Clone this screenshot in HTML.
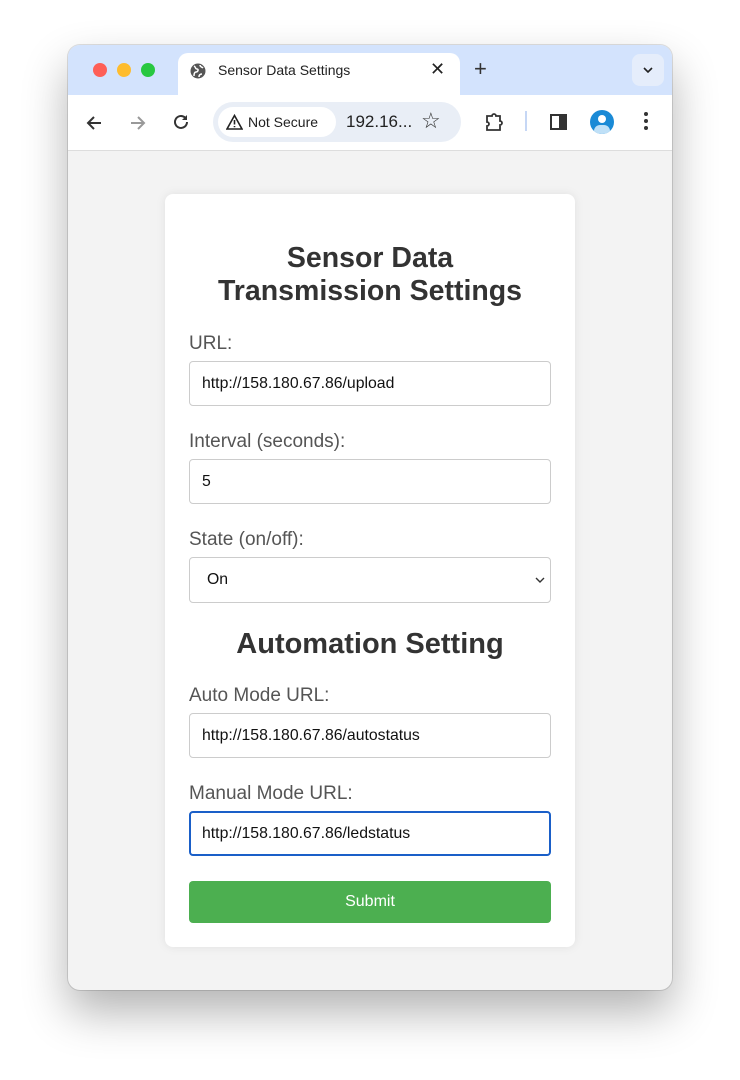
<!DOCTYPE html>
<html><head><style>
*{box-sizing:border-box;margin:0;padding:0}
body{width:740px;height:1080px;background:#fff;font-family:"Liberation Sans",Arial,sans-serif;position:relative;overflow:hidden}
.win{position:absolute;left:68px;top:45px;width:604px;height:945px;border-radius:12px;overflow:hidden;background:#f3f3f3;box-shadow:0 22px 45px rgba(0,0,0,.3),0 0 0 1px rgba(0,0,0,.12)}
.tabbar{position:absolute;left:0;top:0;width:604px;height:50px;background:#d3e3fd}
.dot{position:absolute;top:18px;width:14px;height:14px;border-radius:50%}
.tab{position:absolute;left:110px;top:8px;width:282px;height:44px;background:#fff;border-radius:10px 10px 0 0}
.toolbar{position:absolute;left:0;top:50px;width:604px;height:56px;background:#fff;border-bottom:1px solid #ddd}
.omni{position:absolute;left:145px;top:7px;width:248px;height:40px;border-radius:20px;background:#e9eef6}
.ns{position:absolute;left:5px;top:5px;width:118px;height:30px;border-radius:15px;background:#fff;font-size:14px;line-height:30px;padding-left:30px;color:#222}
.card{position:absolute;left:97px;top:149px;width:410px;height:753px;background:#fff;border-radius:8px;box-shadow:0 0 10px rgba(0,0,0,.08)}
h1{position:absolute;left:0;width:410px;text-align:center;font-size:28.5px;font-weight:bold;color:#333;line-height:33px}
.lbl{position:absolute;left:24px;font-size:19px;color:#555}
.inp{position:absolute;left:24px;width:362px;height:45px;border:1px solid #ccc;border-radius:4px;font-size:15.8px;color:#111;padding-left:12px;line-height:43px}
.btn{position:absolute;left:24px;top:687px;width:362px;height:42px;background:#4caf50;border-radius:4px;color:#fff;font-size:16px;text-align:center;line-height:42px}
</style></head><body>
<div class="win">
<div class="tabbar">
<div class="dot" style="left:25px;background:#fe5f57"></div>
<div class="dot" style="left:49px;background:#febc2e"></div>
<div class="dot" style="left:73px;background:#28c840"></div>
<div class="tab">
<svg style="position:absolute;left:12px;top:10px" width="16" height="16" viewBox="0 0 16 16"><circle cx="8" cy="8" r="7.5" fill="#555"/><path d="M4 3c2 1 1 3 3 3s1 3-1 3-2 3-2 4M10 2c0 2 2 2 3 3M9 14c0-2 1-3 3-3" stroke="#fff" stroke-width="1.5" fill="none"/></svg>
<div style="position:absolute;left:40px;top:9px;font-size:14px;color:#222">Sensor Data Settings</div>
<div style="position:absolute;left:252px;top:6px;font-size:18px;color:#222">✕</div>
</div>
<div style="position:absolute;left:406px;top:11px;font-size:22px;color:#333">+</div>
<div style="position:absolute;left:564px;top:9px;width:32px;height:32px;border-radius:8px;background:#e5edfb"><svg style="position:absolute;left:11px;top:13px" width="10" height="6"><path d="M1 1l4 4 4-4" stroke="#222" stroke-width="1.6" fill="none"/></svg></div>
</div>
<div class="toolbar">
<svg style="position:absolute;left:17px;top:19px" width="18" height="18" viewBox="0 0 18 18"><path d="M16 9H3M9 3L3 9l6 6" stroke="#333" stroke-width="2" fill="none"/></svg>
<svg style="position:absolute;left:61px;top:19px" width="18" height="18" viewBox="0 0 18 18"><path d="M2 9h13M9 3l6 6-6 6" stroke="#999" stroke-width="2" fill="none"/></svg>
<svg style="position:absolute;left:104px;top:18px" width="18" height="18" viewBox="0 0 18 18"><path d="M15 9a6 6 0 1 1-2-4.5" stroke="#333" stroke-width="2" fill="none"/><path d="M15 2v5h-5z" fill="#333"/></svg>
<div class="omni"><div class="ns"><svg style="position:absolute;left:8px;top:7px" width="17" height="16" viewBox="0 0 17 16"><path d="M8.5 1.5L16 15H1z" stroke="#222" stroke-width="1.6" fill="none"/><path d="M8.5 6v4.5M8.5 12v1.3" stroke="#222" stroke-width="1.6"/></svg>Not Secure</div>
<div style="position:absolute;left:133px;top:10px;font-size:17px;color:#222">192.16...</div>
<div style="position:absolute;left:208px;top:6px;font-size:22px;color:#333">☆</div></div>
<svg style="position:absolute;left:415px;top:16px" width="22" height="22" viewBox="0 0 22 22"><path d="M4 5h5a2 2 0 0 1 4 0h4v5a2 2 0 0 1 0 4v5H4v-4a2 2 0 0 0 0-4z" stroke="#333" stroke-width="1.8" fill="none"/></svg>
<div style="position:absolute;left:457px;top:16px;width:2px;height:20px;background:#c6d7f5"></div>
<div style="position:absolute;left:482px;top:19px;width:17px;height:16px;border:2px solid #333"><div style="position:absolute;right:0;top:0;width:6px;height:12px;background:#333"></div></div>
<div style="position:absolute;left:522px;top:15px;width:24px;height:24px;border-radius:50%;background:#1a8ad6;overflow:hidden"><div style="position:absolute;left:8px;top:5px;width:8px;height:8px;border-radius:50%;background:#fff"></div><div style="position:absolute;left:4px;top:15px;width:16px;height:12px;border-radius:8px;background:#bfe0f7"></div></div>
<div style="position:absolute;left:576px;top:17px;width:4px;line-height:6px;font-size:0"><span style="display:block;width:4px;height:4px;border-radius:2px;background:#333;margin-bottom:3px"></span><span style="display:block;width:4px;height:4px;border-radius:2px;background:#333;margin-bottom:3px"></span><span style="display:block;width:4px;height:4px;border-radius:2px;background:#333"></span></div>
</div>
<div class="card">
<h1 style="top:48px">Sensor Data<br>Transmission Settings</h1>
<div class="lbl" style="top:139px">URL:</div>
<div class="inp" style="top:167px">http://158.180.67.86/upload</div>
<div class="lbl" style="top:237px">Interval (seconds):</div>
<div class="inp" style="top:265px">5</div>
<div class="lbl" style="top:335px">State (on/off):</div>
<div class="inp" style="top:363px;height:46px;padding-left:17px">On<svg style="position:absolute;right:5px;top:19px" width="10" height="6"><path d="M1 1l4 4 4-4" stroke="#333" stroke-width="1.4" fill="none"/></svg></div>
<div style="position:absolute;left:0;top:434px;width:410px;text-align:center;font-size:29px;font-weight:bold;color:#333;line-height:33px">Automation Setting</div>
<div class="lbl" style="top:491px">Auto Mode URL:</div>
<div class="inp" style="top:519px">http://158.180.67.86/autostatus</div>
<div class="lbl" style="top:589px">Manual Mode URL:</div>
<div class="inp" style="top:617px;border:2px solid #1a5fc8;padding-left:11px;line-height:41px">http://158.180.67.86/ledstatus</div>
<div class="btn">Submit</div>
</div>
</div>
</body></html>
